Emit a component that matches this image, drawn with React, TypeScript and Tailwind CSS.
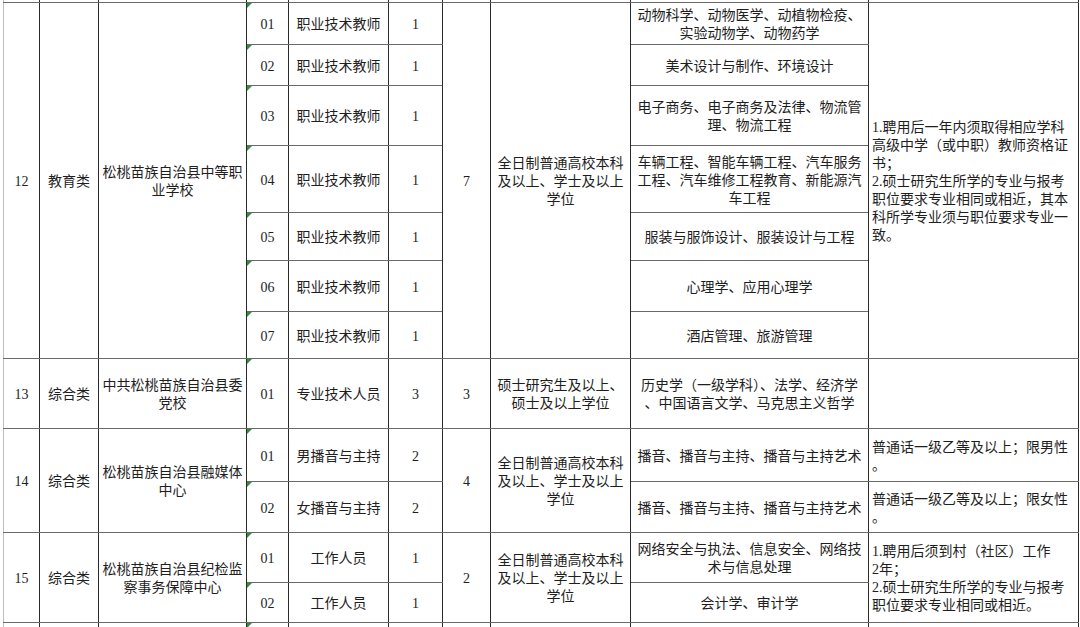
import React from "react";

const Tri = () => (
  <span className="absolute left-0 top-0 w-0 h-0 border-t-[5px] border-t-[#2f8f3f] border-r-[5px] border-r-transparent" />
);

const td = "border border-x-[#2a2a2a] border-y-[#6a6a6a] px-0 pt-[4px] pb-0 text-center align-middle";
const code = `${td} relative`;
const spec = `${td} px-[3px]`;
const note = "border border-x-[#2a2a2a] border-y-[#6a6a6a] pl-[3px] pr-[2px] pt-[4px] pb-0 text-left align-middle";

function L({ lines }: { lines: string[] }) {
  return (
    <>
      {lines.map((l, i) => (
        <div key={i} className="whitespace-nowrap">
          {l}
        </div>
      ))}
    </>
  );
}

function Code({ c }: { c: string }) {
  return (
    <td className={code}>
      <Tri />
      {c}
    </td>
  );
}

export default function App() {
  const degree = ["全日制普通高校本科", "及以上、学士及以上", "学位"];
  const thin = "border border-x-[#2a2a2a] border-y-[#6a6a6a] border-t-0 p-0";
  return (
    <div className="w-[1080px] h-[627px] overflow-hidden bg-white pl-[3px] text-[14px] leading-[18px] text-[#1e1e1e] font-['Liberation_Serif','Noto_Sans_CJK_SC',serif]">
      <table className="table-fixed border-collapse w-[1075px]">
        <colgroup>
          <col className="w-[36px]" />
          <col className="w-[59px]" />
          <col className="w-[148px]" />
          <col className="w-[42px]" />
          <col className="w-[100px]" />
          <col className="w-[54px]" />
          <col className="w-[48px]" />
          <col className="w-[140px]" />
          <col className="w-[238px]" />
          <col className="w-[210px]" />
        </colgroup>
        <tbody>
          <tr className="h-[2px] leading-[0] text-[0px]">
            <td className={`${thin} border-l-[#bdbdbd]`} />
            <td className={thin} />
            <td className={thin} />
            <td className={thin} />
            <td className={thin} />
            <td className={thin} />
            <td className={thin} />
            <td className={thin} />
            <td className={thin} />
            <td className={thin} />
          </tr>
          {/* Row 12 */}
          <tr className="h-[42px]">
            <td rowSpan={7} className={`${td} border-l-[#bdbdbd]`}>12</td>
            <td rowSpan={7} className={td}>教育类</td>
            <td rowSpan={7} className={td}>
              <L lines={["松桃苗族自治县中等职", "业学校"]} />
            </td>
            <Code c="01" />
            <td className={td}>职业技术教师</td>
            <td className={td}>1</td>
            <td rowSpan={7} className={td}>7</td>
            <td rowSpan={7} className={td}>
              <L lines={degree} />
            </td>
            <td className={spec}>
              <L lines={["动物科学、动物医学、动植物检疫、", "实验动物学、动物药学"]} />
            </td>
            <td rowSpan={7} className={note}>
              <L
                lines={[
                  "1.聘用后一年内须取得相应学科",
                  "高级中学（或中职）教师资格证",
                  "书；",
                  "2.硕士研究生所学的专业与报考",
                  "职位要求专业相同或相近，其本",
                  "科所学专业须与职位要求专业一",
                  "致。",
                ]}
              />
            </td>
          </tr>
          <tr className="h-[41px]">
            <Code c="02" />
            <td className={td}>职业技术教师</td>
            <td className={td}>1</td>
            <td className={spec}>美术设计与制作、环境设计</td>
          </tr>
          <tr className="h-[60px]">
            <Code c="03" />
            <td className={td}>职业技术教师</td>
            <td className={td}>1</td>
            <td className={spec}>
              <L lines={["电子商务、电子商务及法律、物流管", "理、物流工程"]} />
            </td>
          </tr>
          <tr className="h-[67px]">
            <Code c="04" />
            <td className={td}>职业技术教师</td>
            <td className={td}>1</td>
            <td className={spec}>
              <L lines={["车辆工程、智能车辆工程、汽车服务", "工程、汽车维修工程教育、新能源汽", "车工程"]} />
            </td>
          </tr>
          <tr className="h-[48px]">
            <Code c="05" />
            <td className={td}>职业技术教师</td>
            <td className={td}>1</td>
            <td className={spec}>服装与服饰设计、服装设计与工程</td>
          </tr>
          <tr className="h-[51px]">
            <Code c="06" />
            <td className={td}>职业技术教师</td>
            <td className={td}>1</td>
            <td className={spec}>心理学、应用心理学</td>
          </tr>
          <tr className="h-[47px]">
            <Code c="07" />
            <td className={td}>职业技术教师</td>
            <td className={td}>1</td>
            <td className={spec}>酒店管理、旅游管理</td>
          </tr>
          {/* Row 13 */}
          <tr className="h-[70px]">
            <td className={`${td} border-l-[#bdbdbd]`}>13</td>
            <td className={td}>综合类</td>
            <td className={td}>
              <L lines={["中共松桃苗族自治县委", "党校"]} />
            </td>
            <Code c="01" />
            <td className={td}>专业技术人员</td>
            <td className={td}>3</td>
            <td className={td}>3</td>
            <td className={td}>
              <L lines={["硕士研究生及以上、", "硕士及以上学位"]} />
            </td>
            <td className={spec}>
              <L lines={["历史学（一级学科）、法学、经济学", "、中国语言文学、马克思主义哲学"]} />
            </td>
            <td className={note}></td>
          </tr>
          {/* Row 14 */}
          <tr className="h-[53px]">
            <td rowSpan={2} className={`${td} border-l-[#bdbdbd]`}>14</td>
            <td rowSpan={2} className={td}>综合类</td>
            <td rowSpan={2} className={td}>
              <L lines={["松桃苗族自治县融媒体", "中心"]} />
            </td>
            <Code c="01" />
            <td className={td}>男播音与主持</td>
            <td className={td}>2</td>
            <td rowSpan={2} className={td}>4</td>
            <td rowSpan={2} className={td}>
              <L lines={degree} />
            </td>
            <td className={spec}>播音、播音与主持、播音与主持艺术</td>
            <td className={note}>
              <L lines={["普通话一级乙等及以上；限男性", "。"]} />
            </td>
          </tr>
          <tr className="h-[51px]">
            <Code c="02" />
            <td className={td}>女播音与主持</td>
            <td className={td}>2</td>
            <td className={spec}>播音、播音与主持、播音与主持艺术</td>
            <td className={note}>
              <L lines={["普通话一级乙等及以上；限女性", "。"]} />
            </td>
          </tr>
          {/* Row 15 */}
          <tr className="h-[50px]">
            <td rowSpan={2} className={`${td} border-l-[#bdbdbd]`}>15</td>
            <td rowSpan={2} className={td}>综合类</td>
            <td rowSpan={2} className={td}>
              <L lines={["松桃苗族自治县纪检监", "察事务保障中心"]} />
            </td>
            <Code c="01" />
            <td className={td}>工作人员</td>
            <td className={td}>1</td>
            <td rowSpan={2} className={td}>2</td>
            <td rowSpan={2} className={td}>
              <L lines={degree} />
            </td>
            <td className={spec}>
              <L lines={["网络安全与执法、信息安全、网络技", "术与信息处理"]} />
            </td>
            <td rowSpan={2} className={note}>
              <L
                lines={[
                  "1.聘用后须到村（社区）工作",
                  "2年；",
                  "2.硕士研究生所学的专业与报考",
                  "职位要求专业相同或相近。",
                ]}
              />
            </td>
          </tr>
          <tr className="h-[40px]">
            <Code c="02" />
            <td className={td}>工作人员</td>
            <td className={td}>1</td>
            <td className={spec}>会计学、审计学</td>
          </tr>
          <tr className="h-[20px]">
            <td className={`${td} border-l-[#bdbdbd]`} />
            <td className={td} />
            <td className={td} />
            <td className={code}>
              <Tri />
            </td>
            <td className={td} />
            <td className={td} />
            <td className={td} />
            <td className={td} />
            <td className={td} />
            <td className={td} />
          </tr>
        </tbody>
      </table>
    </div>
  );
}
